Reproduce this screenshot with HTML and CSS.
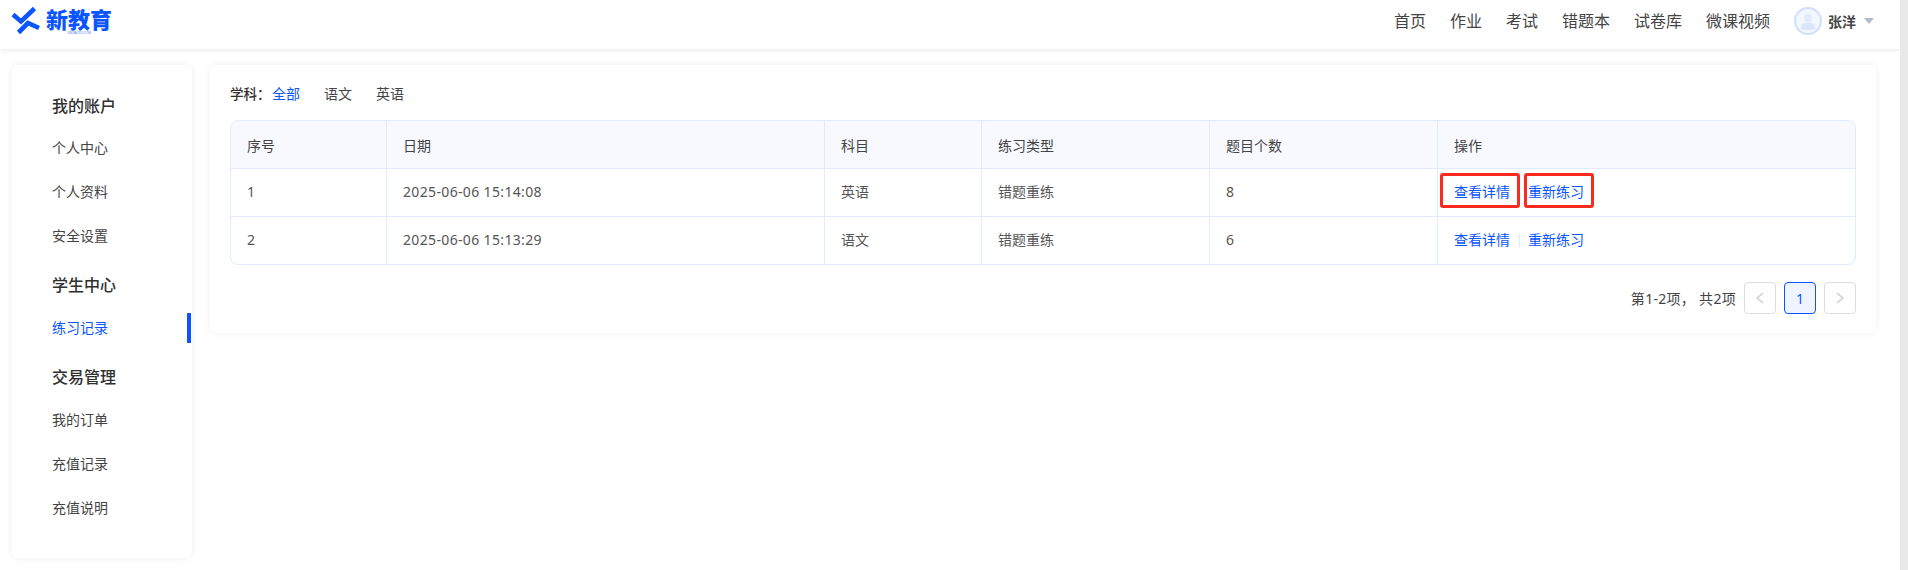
FILE: index.html
```html
<!DOCTYPE html>
<html lang="zh-CN">
<head>
<meta charset="utf-8">
<title>练习记录</title>
<link rel="stylesheet" href="styles.css">
</head>
<body>
<div class="app">
  <div class="page">
    <header class="topbar">
      <div class="logo">
        <svg class="logo-mark" viewBox="0 0 30 30" width="30" height="30">
          <path d="M2 8.5 L10 15.5 L23.5 2.5" fill="none" stroke="#0b55ff" stroke-width="4.6"/>
          <path d="M7.5 26.5 L17 17 L28 22" fill="none" stroke="#0b55ff" stroke-width="4.6"/>
        </svg>
        <div class="logo-text">
          <span class="logo-name">新教育</span>
          <span class="logo-sub">XINJIAOYU.COM</span>
        </div>
      </div>
      <nav class="nav">
        <a class="nav-link">首页</a>
        <a class="nav-link">作业</a>
        <a class="nav-link">考试</a>
        <a class="nav-link">错题本</a>
        <a class="nav-link">试卷库</a>
        <a class="nav-link">微课视频</a>
      </nav>
      <div class="user">
        <svg class="avatar" viewBox="0 0 28 28" width="28" height="28">
          <circle cx="14" cy="14" r="13" fill="#f3f7ff" stroke="#cfdfff" stroke-width="2"/>
          <circle cx="14" cy="11" r="4.2" fill="#e2ebfd"/>
          <path d="M6.5 21.5 C7 16.5 10 15.5 14 15.5 C18 15.5 21 16.5 21.5 21.5 C19 23.5 9 23.5 6.5 21.5 Z" fill="#dbe6fc"/>
        </svg>
        <span class="user-name">张洋</span>
        <span class="caret"></span>
      </div>
    </header>
    <div class="content">
      <aside class="sidebar">
        <h3 class="side-title">我的账户</h3>
        <a class="side-item">个人中心</a>
        <a class="side-item">个人资料</a>
        <a class="side-item">安全设置</a>
        <h3 class="side-title">学生中心</h3>
        <a class="side-item active">练习记录</a>
        <h3 class="side-title">交易管理</h3>
        <a class="side-item">我的订单</a>
        <a class="side-item">充值记录</a>
        <a class="side-item">充值说明</a>
      </aside>
      <main class="panel">
        <div class="filter">
          <span class="filter-label">学科：</span>
          <a class="filter-opt on">全部</a>
          <a class="filter-opt">语文</a>
          <a class="filter-opt">英语</a>
        </div>
        <table class="records">
          <colgroup>
            <col class="c1"><col class="c2"><col class="c3"><col class="c4"><col class="c5"><col>
          </colgroup>
          <thead>
            <tr><th>序号</th><th>日期</th><th>科目</th><th>练习类型</th><th>题目个数</th><th>操作</th></tr>
          </thead>
          <tbody>
            <tr>
              <td class="num">1</td><td class="num date">2025-06-06 15:14:08</td><td>英语</td><td>错题重练</td><td class="num">8</td>
              <td><a class="act marked">查看详情</a><span class="sep"></span><a class="act marked">重新练习</a></td>
            </tr>
            <tr>
              <td class="num">2</td><td class="num date">2025-06-06 15:13:29</td><td>语文</td><td>错题重练</td><td class="num">6</td>
              <td><a class="act">查看详情</a><span class="sep"></span><a class="act">重新练习</a></td>
            </tr>
          </tbody>
        </table>
        <div class="pager">
          <span class="pager-total">第1-2项， 共2项</span>
          <span class="pg disabled"><svg viewBox="0 0 10 12" width="10" height="12"><path d="M8 1 L2 6 L8 11" fill="none" stroke="#c9c9c9" stroke-width="1.2"/></svg></span>
          <span class="pg current">1</span>
          <span class="pg disabled"><svg viewBox="0 0 10 12" width="10" height="12"><path d="M2 1 L8 6 L2 11" fill="none" stroke="#c9c9c9" stroke-width="1.2"/></svg></span>
        </div>
      </main>
    </div>
  </div>
  <div class="scrollbar"></div>
</div>
</body>
</html>
```
FILE: styles.css
```css
* { box-sizing: border-box; }
html, body { margin: 0; height: 100%; overflow: hidden; }
body {
  font-family: "Noto Sans", "Noto Sans CJK SC", sans-serif;
  color: #333;
  background: #fff;
  font-size: 14px;
}
a { color: inherit; text-decoration: none; }
.app { display: flex; height: 570px; }
.page { flex: 1; min-width: 0; }
.scrollbar { width: 8px; background: #e8e8e8; }

.topbar {
  height: 49px;
  display: flex;
  align-items: center;
  padding: 0 26px 7px 11px;
  background: #fff;
  box-shadow: 0 1px 4px rgba(40, 60, 100, 0.12);
}
.logo { display: flex; align-items: center; gap: 5px; }
.logo-mark { display: block; }
.logo-text { display: flex; flex-direction: column; align-items: center; width: 66px; }
.logo-name {
  font-size: 22px;
  line-height: 24px;
  font-weight: 900;
  color: #0b55ff;
}
.logo-sub {
  font-family: "Liberation Sans", sans-serif;
  font-size: 3px;
  line-height: 3px;
  color: #3f78ff;
  margin-top: 1px;
}
.nav { display: flex; gap: 24px; margin-left: auto; }
.nav-link { font-size: 16px; line-height: 24px; color: #444; }
.user { display: flex; align-items: center; margin-left: 24px; }
.avatar { display: block; }
.user-name { margin-left: 6px; font-size: 14px; font-weight: 700; color: #444; }
.caret {
  margin-left: 8px;
  border-left: 5px solid transparent;
  border-right: 5px solid transparent;
  border-top: 6px solid #b5bccb;
}

.content { display: flex; align-items: flex-start; padding: 16px 24px 0 12px; gap: 18px; }
.sidebar {
  width: 180px;
  height: 493px;
  flex: none;
  padding: 23px 0 0 40px;
  background: #fff;
  border-radius: 6px;
  box-shadow: 0 0 6px rgba(60, 80, 120, 0.09);
}
.side-title {
  margin: 9px 0 3px;
  height: 36px;
  font-size: 16px;
  line-height: 36px;
  font-weight: 500;
  color: #303030;
}
.side-title:first-child { margin: 0 0 2px; }
.side-item {
  display: block;
  position: relative;
  height: 44px;
  line-height: 44px;
  font-size: 14px;
  color: #444;
}
.side-item.active { color: #0b55ff; }
.side-item.active::after {
  content: "";
  position: absolute;
  right: 1px;
  top: 7px;
  width: 4px;
  height: 30px;
  background: #0b55ff;
}

.panel {
  flex: 1;
  min-width: 0;
  height: 268px;
  padding: 19px 20px 20px;
  background: #fff;
  border-radius: 6px;
  box-shadow: 0 0 6px rgba(60, 80, 120, 0.09);
}
.filter { display: flex; align-items: center; height: 20px; line-height: 20px; margin-bottom: 16px; }
.filter-label { font-weight: 500; color: #303030; width: 42px; font-size: 13.5px; }
.filter-opt { width: 28px; margin-right: 24px; color: #444; font-size: 14px; }
.filter-opt.on { color: #0b55ff; }

.records {
  width: 100%;
  table-layout: fixed;
  border-collapse: separate;
  border-spacing: 0;
  border: 1px solid #e2eaff;
  border-radius: 8px;
  overflow: hidden;
  font-size: 14px;
}
.c1 { width: 156px; }
.c2 { width: 438px; }
.c3 { width: 157px; }
.c4 { width: 228px; }
.c5 { width: 228px; }
.records th, .records td {
  height: 48px;
  padding: 0 16px;
  text-align: left;
  font-weight: 400;
  border-right: 1px solid #e2eaff;
  border-bottom: 1px solid #e2eaff;
  color: #555;
}
.records td { padding-bottom: 4px; }
.records td.num { padding-bottom: 2px; }
.records td.date { letter-spacing: 0.35px; }
.records th { background: #f8f9ff; color: #444; }
.records th:last-child, .records td:last-child { border-right: 0; }
.records tr:last-child td { border-bottom: 0; height: 47px; }
.act { position: relative; color: #0b55ff; }
.sep {
  display: inline-block;
  width: 1px;
  height: 13px;
  margin: 0 8px 0 9px;
  background: #e2eaff;
  vertical-align: -2px;
}
.act.marked::after {
  content: "";
  position: absolute;
  left: -14px;
  right: -10px;
  top: -9px;
  bottom: -7px;
  border: 3px solid #fa2a1e;
  border-radius: 3px;
}
.act.marked:last-child::after { left: -4px; right: -10px; }

.pager { display: flex; align-items: center; justify-content: flex-end; gap: 8px; margin-top: 17px; }
.pager-total { color: #444; font-size: 14px; letter-spacing: 0.3px; }
.pg {
  width: 32px;
  height: 32px;
  display: flex;
  align-items: center;
  justify-content: center;
  border: 1px solid #dcdcdc;
  border-radius: 4px;
  font-size: 14px;
}
.pg.current { border-color: #0b55ff; background: #eef3ff; color: #0b55ff; }
```
